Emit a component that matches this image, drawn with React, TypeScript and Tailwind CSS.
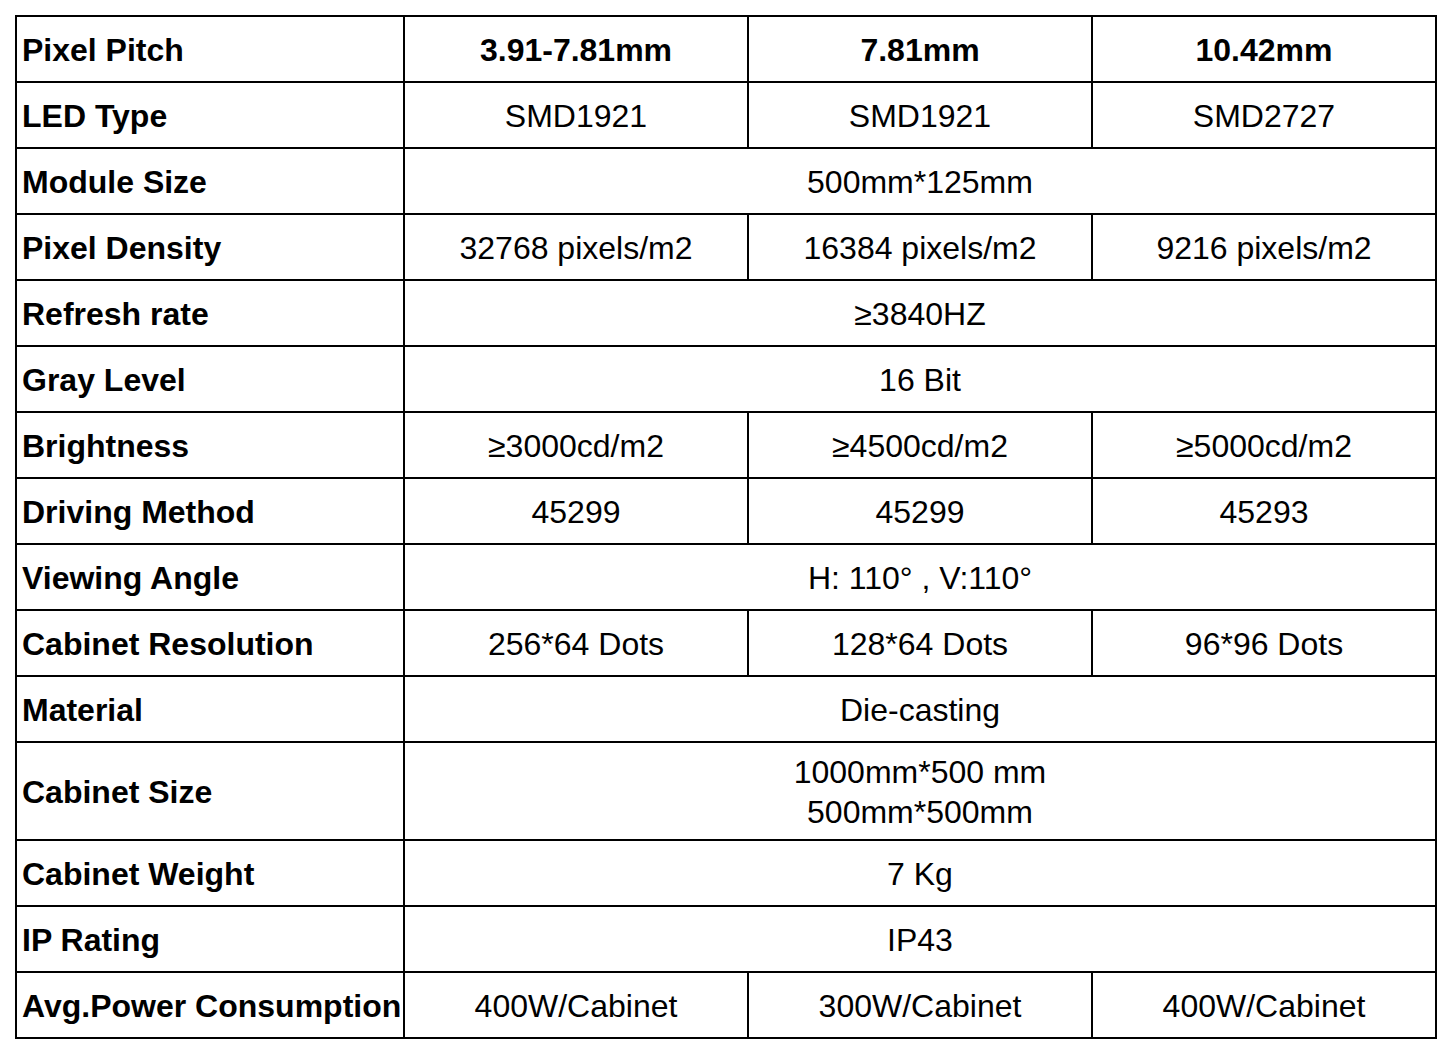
type Row = {
  label: string;
  values: string[];
  bold?: boolean;
  tall?: boolean;
};

const rows: Row[] = [
  { label: 'Pixel Pitch', values: ['3.91-7.81mm', '7.81mm', '10.42mm'], bold: true },
  { label: 'LED Type', values: ['SMD1921', 'SMD1921', 'SMD2727'] },
  { label: 'Module Size', values: ['500mm*125mm'] },
  { label: 'Pixel Density', values: ['32768 pixels/m2', '16384 pixels/m2', '9216 pixels/m2'] },
  { label: 'Refresh rate', values: ['≥3840HZ'] },
  { label: 'Gray Level', values: ['16 Bit'] },
  { label: 'Brightness', values: ['≥3000cd/m2', '≥4500cd/m2', '≥5000cd/m2'] },
  { label: 'Driving Method', values: ['45299', '45299', '45293'] },
  { label: 'Viewing Angle', values: ['H: 110° , V:110°'] },
  { label: 'Cabinet Resolution', values: ['256*64 Dots', '128*64 Dots', '96*96 Dots'] },
  { label: 'Material', values: ['Die-casting'] },
  { label: 'Cabinet Size', values: ['1000mm*500 mm\n500mm*500mm'], tall: true },
  { label: 'Cabinet Weight', values: ['7 Kg'] },
  { label: 'IP Rating', values: ['IP43'] },
  { label: 'Avg.Power Consumption', values: ['400W/Cabinet', '300W/Cabinet', '400W/Cabinet'] },
];

export default function App() {
  return (
    <div className="min-h-screen bg-white pt-[15px] pl-[15px] text-black font-['Liberation_Sans',Arial,sans-serif]">
      <table className="border-separate border-spacing-0 border-t-2 border-l-2 border-black text-[32px] leading-[40px] table-fixed w-[1422px]">
        <colgroup>
          <col className="w-[388px]" />
          <col className="w-[344px]" />
          <col className="w-[344px]" />
          <col className="w-[344px]" />
        </colgroup>
        <tbody>
          {rows.map((row) => (
            <tr key={row.label} className={row.tall ? 'h-[98px]' : 'h-[66px]'}>
              <td className="border-r-2 border-b-2 border-black pl-[5px] pr-0 pt-[2px] pb-0 font-bold whitespace-nowrap align-middle">
                {row.label}
              </td>
              {row.values.map((v, i) => (
                <td
                  key={i}
                  colSpan={row.values.length === 1 ? 3 : 1}
                  className={`border-r-2 border-b-2 border-black pt-[2px] pb-0 text-center align-middle whitespace-pre-line ${row.bold ? 'font-bold' : ''}`}
                >
                  {v}
                </td>
              ))}
            </tr>
          ))}
        </tbody>
      </table>
    </div>
  );
}
